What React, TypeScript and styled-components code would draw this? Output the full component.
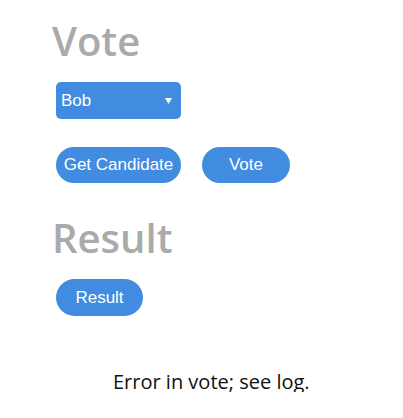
import React from "react";
import styled, { createGlobalStyle } from "styled-components";

const Global = createGlobalStyle`
  html, body { margin: 0; padding: 0; background: #fff; }
  body { font-family: "Liberation Sans", Arial, sans-serif; }
`;

const BLUE = "#418be0";

const Page = styled.div`
  padding: 21px 0 0 52px;
  display: flex;
  flex-direction: column;
  align-items: flex-start;
`;

const Heading = styled.h1<{ $top?: number }>`
  margin: ${(p) => p.$top ?? 0}px 0 0 0;
  font-family: "Open Sans", sans-serif;
  font-weight: 600;
  font-size: 40px;
  line-height: 40px;
  color: #aaa;
`;

const SelectWrap = styled.div`
  position: relative;
  margin: 21px 0 0 4px;
  width: 125px;
  height: 37px;
`;

const Select = styled.select`
  appearance: none;
  -webkit-appearance: none;
  width: 100%;
  height: 100%;
  border: none;
  border-radius: 5px;
  background: ${BLUE};
  color: #fff;
  font-family: "Liberation Sans", Arial, sans-serif;
  font-size: 17px;
  padding: 0 0 0 5px;
  outline: none;
`;

const Arrow = styled.svg`
  position: absolute;
  right: 9px;
  top: 16px;
  pointer-events: none;
`;

const Row = styled.div<{ $top: number }>`
  display: flex;
  gap: 21px;
  margin: ${(p) => p.$top}px 0 0 4px;
`;

const Button = styled.button<{ $w: number; $h?: number }>`
  width: ${(p) => p.$w}px;
  height: ${(p) => p.$h ?? 36}px;
  border: none;
  border-radius: 19px;
  background: ${BLUE};
  color: #fff;
  font-family: "Liberation Sans", Arial, sans-serif;
  font-size: 17px;
  padding: 0;
  cursor: pointer;
`;

const Message = styled.p`
  margin: 56px 0 0 61px;
  font-family: "Open Sans", sans-serif;
  font-size: 20px;
  line-height: 20px;
  color: #111;
`;

export default function App() {
  return (
    <>
      <Global />
      <Page>
        <Heading>Vote</Heading>
        <SelectWrap>
          <Select defaultValue="Bob">
            <option>Bob</option>
            <option>Alice</option>
          </Select>
          <Arrow width="7" height="6" viewBox="0 0 7 6">
            <path d="M0 0 H7 L3.5 6 Z" fill="#fff" />
          </Arrow>
        </SelectWrap>
        <Row $top={28}>
          <Button $w={125}>Get Candidate</Button>
          <Button $w={88}>Vote</Button>
        </Row>
        <Heading $top={35}>Result</Heading>
        <Row $top={21}>
          <Button $w={87} $h={37}>Result</Button>
        </Row>
        <Message>Error in vote; see log.</Message>
      </Page>
    </>
  );
}
